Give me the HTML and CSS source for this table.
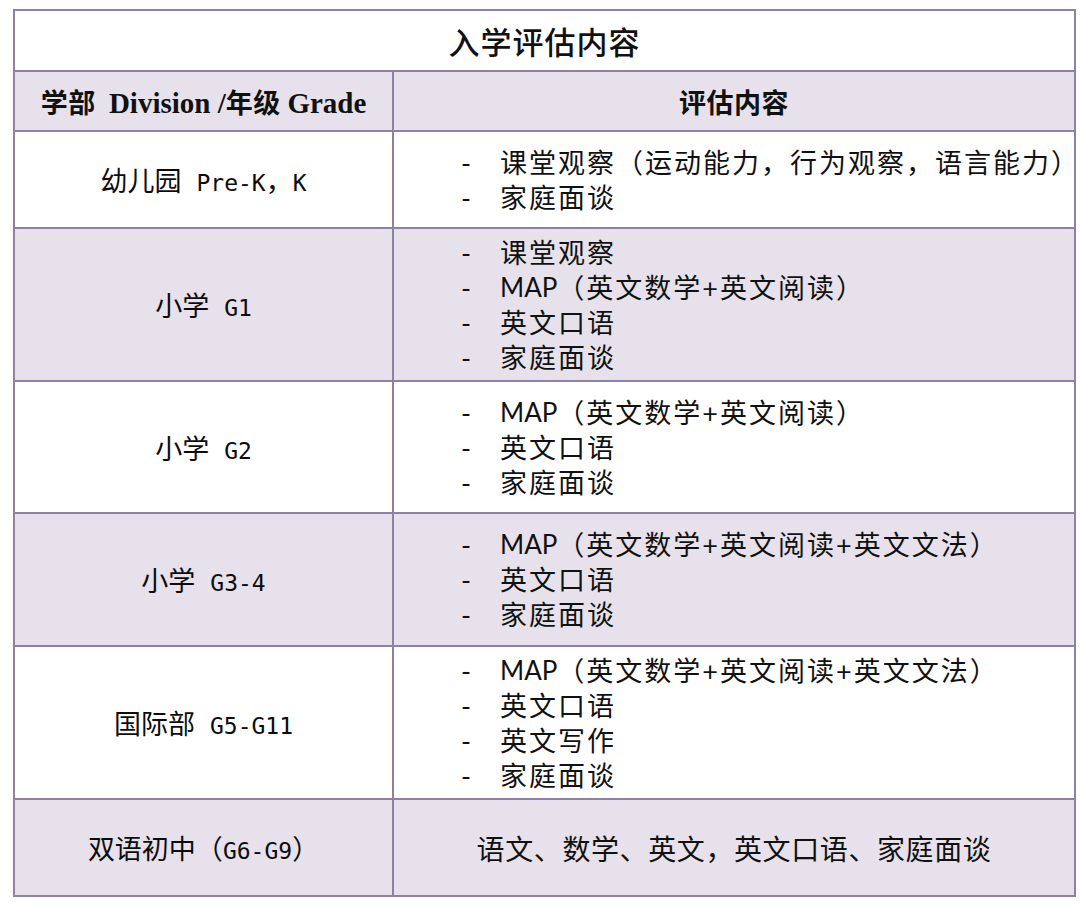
FILE: index.html
```html
<!DOCTYPE html>
<html lang="zh-CN">
<head>
<meta charset="utf-8">
<link rel="stylesheet" href="styles.css">
</head>
<body>
<table class="grid">
  <colgroup><col class="c1"><col class="c2"></colgroup>
  <tr class="r-title"><td colspan="2" class="title">入学评估内容</td></tr>
  <tr class="r-head shade">
    <td class="head">学部&nbsp; <span class="en">Division /</span>年级 <span class="en">Grade</span></td>
    <td class="head">评估内容</td>
  </tr>
  <tr class="r-97">
    <td class="div">幼儿园<span class="lat sp">Pre-K</span>，<span class="lat">K</span></td>
    <td class="items">
      <div class="it"><span class="d">-</span>课堂观察（运动能力，行为观察，语言能力）</div>
      <div class="it"><span class="d">-</span>家庭面谈</div>
    </td>
  </tr>
  <tr class="r-153 shade">
    <td class="div">小学<span class="lat sp">G1</span></td>
    <td class="items">
      <div class="it"><span class="d">-</span>课堂观察</div>
      <div class="it"><span class="d">-</span><span class="map">MAP</span>（英文数学+英文阅读）</div>
      <div class="it"><span class="d">-</span>英文口语</div>
      <div class="it"><span class="d">-</span>家庭面谈</div>
    </td>
  </tr>
  <tr class="r-132">
    <td class="div">小学<span class="lat sp">G2</span></td>
    <td class="items">
      <div class="it"><span class="d">-</span><span class="map">MAP</span>（英文数学+英文阅读）</div>
      <div class="it"><span class="d">-</span>英文口语</div>
      <div class="it"><span class="d">-</span>家庭面谈</div>
    </td>
  </tr>
  <tr class="r-133 shade">
    <td class="div">小学<span class="lat sp">G3-4</span></td>
    <td class="items">
      <div class="it"><span class="d">-</span><span class="map">MAP</span>（英文数学+英文阅读+英文文法）</div>
      <div class="it"><span class="d">-</span>英文口语</div>
      <div class="it"><span class="d">-</span>家庭面谈</div>
    </td>
  </tr>
  <tr class="r-153">
    <td class="div">国际部<span class="lat sp">G5-G11</span></td>
    <td class="items">
      <div class="it"><span class="d">-</span><span class="map">MAP</span>（英文数学+英文阅读+英文文法）</div>
      <div class="it"><span class="d">-</span>英文口语</div>
      <div class="it"><span class="d">-</span>英文写作</div>
      <div class="it"><span class="d">-</span>家庭面谈</div>
    </td>
  </tr>
  <tr class="r-97 shade">
    <td class="div">双语初中（<span class="lat">G6-G9</span>）</td>
    <td class="plain">语文、数学、英文，英文口语、家庭面谈</td>
  </tr>
</table>
</body>
</html>
```

FILE: styles.css
```css
html, body {
  margin: 0;
  background: #ffffff;
}
body {
  padding: 9px 0 0 13px;
  font-family: "Noto Sans CJK SC", sans-serif;
  color: #111111;
}
.grid {
  border-collapse: collapse;
  table-layout: fixed;
  width: 1061px;
}
.c1 { width: 379px; }
.c2 { width: 682px; }
.grid td {
  border: 2px solid #8f80a8;
  padding: 0;
  vertical-align: middle;
}
.shade td { background: #e6e1ea; }
.r-title { height: 61px; }
.r-head { height: 60px; }
.r-97 { height: 97px; }
.r-153 { height: 153px; }
.r-132 { height: 132px; }
.r-133 { height: 133px; }
.title {
  text-align: center;
  font-size: 31px;
  font-weight: 500;
  letter-spacing: 1px;
  background: #ffffff;
}
.head {
  text-align: center;
  font-size: 27px;
  font-weight: 700;
  letter-spacing: 0.5px;
}
.head .en {
  font-family: "Liberation Serif", serif;
  font-size: 29px;
  font-weight: 700;
  letter-spacing: 0;
}
.div {
  text-align: center;
  font-size: 27px;
  font-weight: 400;
  color: #0c0c0c;
}
.lat {
  font-family: "DejaVu Sans Mono", monospace;
  font-size: 23px;
  font-weight: 400;
}
.sp {
  margin-left: 15px;
}
.items {
  padding-left: 67px !important;
  font-family: Lato, "Noto Sans CJK SC", sans-serif;
  font-size: 27px;
  letter-spacing: 2px;
  line-height: 35px;
}
.it {
  display: flex;
}
.d {
  width: 39px;
  flex: none;
  letter-spacing: 0;
}
.map {
  font-size: 26px;
  letter-spacing: 0;
}
.plain {
  text-align: center;
  font-size: 28px;
  letter-spacing: 0.6px;
}
```
